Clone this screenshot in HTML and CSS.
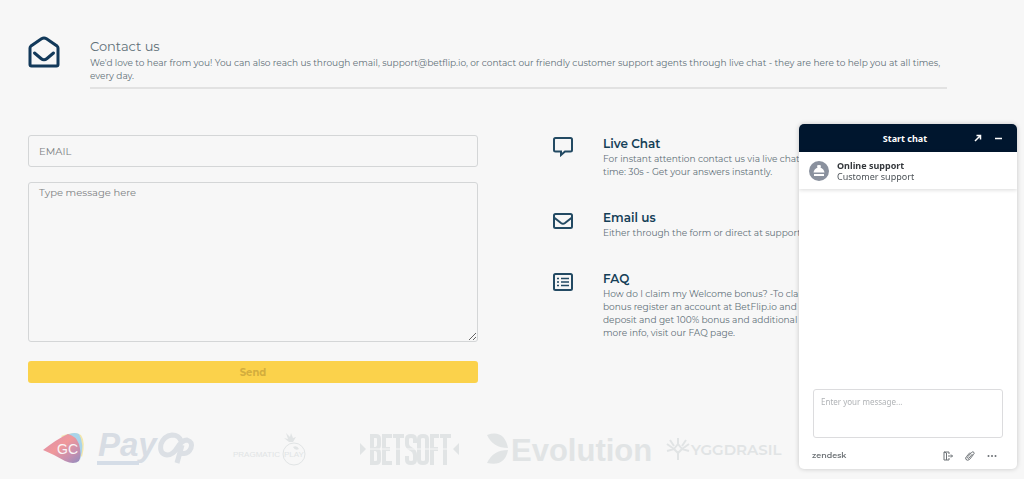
FILE: index.html
```
<!DOCTYPE html>
<html lang="en">
<head>
    <meta charset="UTF-8">
    <meta name="viewport" content="width=device-width, initial-scale=1.0">
    <title>Contact us</title>
    <link rel="stylesheet" href="styles.css">
</head>
<body>
    <main class="page">
        <header class="intro">
            <svg class="intro-icon" viewBox="0 0 32 32" aria-hidden="true">
                <path d="M2 12 Q2 11 3 10 L13.500 2.800 Q16 1.200 18.500 2.800 L29 10 Q30 11 30 12 V28.500 Q30 30 28.500 30 H3.500 Q2 30 2 28.500 Z"/>
                <path d="M6.500 17 L13 22.500 Q16 25 19 22.500 L25.500 17"/>
            </svg>
            <div class="intro-text">
                <h1>Contact us</h1>
                <p>We'd love to hear from you! You can also reach us through email, support@betflip.io, or contact our friendly customer support agents through live chat - they are here to help you at all times, every day.</p>
            </div>
        </header>

        <div class="columns">
            <form class="contact-form">
                <input type="email" aria-label="Email" placeholder="EMAIL">
                <textarea aria-label="Message" placeholder="Type message here"></textarea>
                <button type="submit" disabled>Send</button>
            </form>

            <div class="options">
                <section class="option">
                    <svg viewBox="0 0 20 20" aria-hidden="true">
                        <path d="M2.500 1 H17.500 Q19 1 19 2.500 V13 Q19 14.500 17.500 14.500 H12 L8 18 V14.500 H2.500 Q1 14.500 1 13 V2.500 Q1 1 2.500 1 Z"/>
                    </svg>
                    <div>
                        <h2>Live Chat</h2>
                        <p>For instant attention contact us via live chat. Average wait time: 30s - Get your answers instantly.</p>
                    </div>
                </section>
                <section class="option">
                    <svg viewBox="0 0 20 20" aria-hidden="true">
                        <rect x="1" y="3" width="18" height="14" rx="1.500"/>
                        <path d="M1 6.500 L8 12 Q10 13.500 12 12 L19 6.500"/>
                    </svg>
                    <div>
                        <h2>Email us</h2>
                        <p>Either through the form or direct at support@betflip.io</p>
                    </div>
                </section>
                <section class="option">
                    <svg viewBox="0 0 20 20" aria-hidden="true">
                        <rect x="1" y="2" width="18" height="16" rx="1.500"/>
                        <path class="thin" d="M8 6.500 H16 M8 10 H16 M8 13.500 H16 M4 6.500 H6 M4 10 H6 M4 13.500 H6"/>
                    </svg>
                    <div>
                        <h2>FAQ</h2>
                        <p>How do I claim my Welcome bonus? -To claim your first bonus register an account at BetFlip.io and simply make a deposit and get 100% bonus and additional 100 spins. For more info, visit our FAQ page.</p>
                    </div>
                </section>
            </div>
        </div>

        <footer class="partners">
            <svg width="47" height="64" viewBox="0 0 47 64" role="img" aria-label="GC">
                <defs>
                    <linearGradient id="gc" x1="0" y1="0" x2="1" y2="1">
                        <stop offset="0" stop-color="#d78fb0"/>
                        <stop offset=".45" stop-color="#f0989a"/>
                        <stop offset=".75" stop-color="#c58fb0"/>
                        <stop offset="1" stop-color="#8f8cc0"/>
                    </linearGradient>
                </defs>
                <path fill="#f3e7ac" d="M18 21 Q32 16 38 20 Q43 27 39 42 Z"/>
                <path fill="#a9d4ea" d="M20 22 Q30 16 36 19 Q42 29 37 45 Z"/>
                <path fill="url(#gc)" d="M0 35 Q14 24 25 19 Q33 21 36 29 Q39 40 36 46 Q31 50 22 46 Q12 40 0 35 Z"/>
                <text class="gc-text" x="14" y="39">GC</text>
            </svg>
            <svg width="124" height="64" viewBox="0 0 124 64" role="img" aria-label="PayOp">
                <text class="payop-text" x="8" y="41">Pay</text>
                <path class="payop-line" d="M7 48 H49"/>
                <path class="payop-loop" d="M91 26 Q89 20 82 20 Q74 21 71 29 Q69 39 77 40 Q83 40 87 33 Q92 25 97 25 Q103 27 101 33 Q98 40 91 38 M92 30 L87 48"/>
            </svg>
            <svg width="118" height="64" viewBox="0 0 118 64" role="img" aria-label="Pragmatic Play">
                <text class="pragmatic-text" x="19" y="42">PRAGMATIC</text>
                <text class="pragmatic-text" x="70" y="42">PLAY</text>
                <circle class="ring" cx="80" cy="39" r="11"/>
                <path d="M75 27 L70 23 L74 24 L72 18 L76 22 L77 18 L79 23 L82 22 L79 27 Z M79 32 Q83 30 85 34 Q81 36 79 32 Z"/>
            </svg>
            <svg width="141" height="64" viewBox="0 0 141 64" role="img" aria-label="Betsoft">
                <path d="M28 28 L34 34 L28 40 Z M127 28 L121 34 L127 40 Z"/>
                <path class="betsoft" d="M40 21 H44 Q47 21 47 24 V30 Q47 33 44 34 Q47 35 47 38 V45 Q47 48 44 48 H40 Z M40 34 H44 M60 21 H52 V48 H60 M52 34 H58 M61 21 H72 M66 21 V50 M83 28 V24 Q83 21 79 21 Q75 21 75 24 V29 Q75 32 79 34 Q83 36 83 40 V45 Q83 48 79 48 Q75 48 75 45 V41 M91 21 Q95 21 95 24 V45 Q95 48 91 48 Q87 48 87 45 V24 Q87 21 91 21 Z M107 21 H100 V50 M100 34 H106 M108 21 H119 M113 21 V50"/>
                <path class="cut" d="M36 34 H119"/>
            </svg>
            <svg width="185" height="64" viewBox="0 0 185 64" role="img" aria-label="Evolution">
                <path d="M14 20 Q31 14 35 33 Q20 33 14 20 Z M35 35 Q32 52 14 48 Q20 35 35 35 Z"/>
                <text class="evolution-text" x="38" y="46">Evolution</text>
            </svg>
            <svg width="132" height="64" viewBox="0 0 132 64" role="img" aria-label="Yggdrasil">
                <path class="tree" d="M20 45 V38 L16 34 L9 36 M20 38 L24 34 L31 36 M16 34 L9 29 M24 34 L31 29 M16 31 L12 25 M24 31 L28 25 M20 29 V23 M16 34 L20 29 L24 34 L20 38 Z"/>
                <text class="yggdrasil-text" x="33" y="40">YGGDRASIL</text>
            </svg>
        </footer>
    </main>

    <aside class="chat" aria-label="Start chat">
        <div class="chat-header">
            <h2>Start chat</h2>
            <div class="chat-actions">
                <button type="button" aria-label="Open in new window">
                    <svg viewBox="0 0 10 10"><path d="M2 8 L7.500 2.500 M3.500 2.500 H7.500 V6.500"/></svg>
                </button>
                <button type="button" aria-label="Minimize">
                    <svg viewBox="0 0 10 10"><path d="M1 5.500 H8"/></svg>
                </button>
            </div>
        </div>
        <div class="agent">
            <svg viewBox="0 0 20 20" aria-hidden="true">
                <circle cx="10" cy="10" r="10" fill="#8a919e"/>
                <path fill="#fff" d="M8 5 Q8 4 10 4 Q12 4 12 5 L11.500 6.500 Q15 8 15.500 11.500 H4.500 Q5 8 8.500 6.500 Z M5 13 H15 V15 H5 Z"/>
            </svg>
            <div>
                <strong>Online support</strong>
                <span>Customer support</span>
            </div>
        </div>
        <div class="chat-log"></div>
        <textarea class="chat-input" aria-label="Message" placeholder="Enter your message..."></textarea>
        <div class="chat-footer">
            <a href="#">zendesk</a>
            <div class="chat-tools">
                <button type="button" aria-label="End chat">
                    <svg viewBox="0 0 10 10"><path d="M6 3 V1 H1 V9 H6 V7 M1 1 L3.500 2 V9 M5 5 H9.500 M8 3.500 L9.500 5 L8 6.500"/></svg>
                </button>
                <button type="button" aria-label="Attach file">
                    <svg viewBox="0 0 10 10"><path d="M7.500 3 L4 7 Q3 8 2.500 7 Q2 6.500 3 5.500 L6.500 1.500 Q8 0 9 1.500 Q9.500 2.500 8.500 3.500 L4.500 8.500 Q2.500 10 1 8.500 Q0 7 1.500 5.500 L5 1.500"/></svg>
                </button>
                <button type="button" aria-label="Options">
                    <svg viewBox="0 0 10 10"><path class="dots" d="M1.500 5 H1.510 M5 5 H5.010 M8.500 5 H8.510"/></svg>
                </button>
            </div>
        </div>
    </aside>
</body>
</html>
```
FILE: styles.css
```
* {
    box-sizing: border-box;
}
body {
    margin: 0;
    background-color: #f7f7f7;
    color: #5f7078;
    font-family: Montserrat, Inter, sans-serif;
    font-size: 9px;
    line-height: 13px;
    overflow: hidden;
}
h1, h2, p {
    margin: 0;
}
button {
    font-family: inherit;
    border: none;
    padding: 0;
}
.page {
    padding: 36px 77px 0 28px;
}
.intro {
    display: grid;
    grid-template-columns: 32px 1fr;
    gap: 30px;
}
.intro-icon {
    width: 32px;
    fill: none;
    stroke: #12395a;
    stroke-width: 3;
    stroke-linecap: round;
}
.intro-text {
    border-bottom: 2px solid #e2e2e2;
    padding-bottom: 5px;
}
.intro h1 {
    font-size: 13px;
    font-weight: 400;
    line-height: 20px;
}
.columns {
    display: grid;
    grid-template-columns: 450fr 394fr;
    gap: 75px;
    margin-top: 46px;
}
.contact-form {
    display: flex;
    flex-direction: column;
}
.contact-form input,
.contact-form textarea {
    border: 1px solid #d4d6d7;
    border-radius: 3px;
    background-color: transparent;
    font-family: inherit;
    font-size: 10px;
    padding: 3px 10px;
}
.contact-form input {
    height: 32px;
    margin-bottom: 15px;
}
.contact-form textarea {
    height: 160px;
    margin-bottom: 19px;
}
.contact-form ::placeholder {
    color: #7d8183;
}
.contact-form button {
    height: 22px;
    border-radius: 3px;
    background-color: #fbd24b;
    color: #d3ad3d;
    font-size: 10px;
    font-weight: 700;
}
.option {
    display: grid;
    grid-template-columns: 20px 1fr;
    gap: 30px;
    margin-bottom: 31px;
}
.option svg {
    width: 20px;
    margin-top: 2px;
    fill: none;
    stroke: #234a63;
    stroke-width: 2;
}
.option svg .thin {
    stroke-width: 1.5;
}
.option h2 {
    color: #153f57;
    font-size: 12px;
    font-weight: 600;
    line-height: 17px;
}
.option p {
    max-width: 275px;
}
.partners {
    display: flex;
    margin: 32px 0 0 15px;
    fill: #e1e4e5;
}
.partners svg {
    flex: none;
}
.partners text {
    font-family: "Liberation Sans", Arial, sans-serif;
    font-weight: 700;
}
.partners .gc-text {
    fill: #f9f4f7;
    font-size: 14px;
    font-weight: 400;
}
.partners .payop-text {
    fill: #d8dde4;
    font-size: 33px;
    font-style: italic;
}
.payop-line {
    stroke: #d5dde7;
    stroke-width: 4;
}
.payop-loop {
    fill: none;
    stroke: #dce0e5;
    stroke-width: 5;
}
.partners .pragmatic-text {
    font-size: 8px;
    font-weight: 400;
}
.ring {
    fill: none;
    stroke: #e1e4e5;
    stroke-width: 1;
}
.betsoft {
    fill: none;
    stroke: #e1e4e5;
    stroke-width: 4;
}
.cut {
    stroke: #f7f7f7;
    stroke-width: 1;
}
.partners .evolution-text {
    font-size: 31px;
}
.tree {
    fill: none;
    stroke: #e1e4e5;
    stroke-width: 2;
}
.partners .yggdrasil-text {
    font-family: Montserrat, Lato, sans-serif;
    font-size: 15px;
    font-weight: 600;
}
.chat {
    position: fixed;
    right: 7px;
    bottom: 10px;
    display: flex;
    flex-direction: column;
    width: 218px;
    height: 345px;
    border-radius: 5px;
    background-color: #fff;
    box-shadow: 0 0 5px rgba(0, 0, 0, 0.2);
    font-family: "Noto Sans", sans-serif;
    overflow: hidden;
}
.chat-header {
    display: grid;
    grid-template-columns: 40px 1fr 40px;
    align-items: center;
    height: 28px;
    padding: 0 13px 0 7px;
    background-color: #00162e;
    color: #fff;
}
.chat-header h2 {
    grid-column: 2;
    font-size: 9px;
    text-align: center;
}
.chat button {
    display: flex;
    background: none;
    color: inherit;
}
.chat button svg {
    width: 10px;
    fill: none;
    stroke: currentColor;
    stroke-width: 1;
}
.chat .chat-actions svg {
    stroke-width: 1.5;
}
.chat-actions {
    display: flex;
    justify-content: flex-end;
    gap: 11px;
}
.agent {
    display: flex;
    align-items: center;
    gap: 8px;
    height: 37px;
    padding: 0 10px;
    box-shadow: 0 1px 4px rgba(0, 0, 0, 0.15);
    color: #4d5358;
    line-height: 11px;
}
.agent svg {
    width: 20px;
}
.agent strong,
.agent span {
    display: block;
}
.agent strong {
    color: #34383c;
}
.chat-log {
    flex: 1;
}
.chat-input {
    height: 49px;
    margin: 0 14px;
    padding: 6px 7px;
    border: 1px solid #dcdcde;
    border-radius: 3px;
    font-family: inherit;
    font-size: 8px;
    resize: none;
}
.chat-input::placeholder {
    color: #b0b3b6;
}
.chat-footer {
    display: flex;
    justify-content: space-between;
    align-items: center;
    height: 31px;
    padding: 4px 20px 0 13px;
    color: #6d7276;
}
.chat-footer a {
    color: inherit;
    font-family: Montserrat, Inter, sans-serif;
    font-size: 8px;
    font-weight: 600;
    text-decoration: none;
}
.chat-tools {
    display: flex;
    gap: 12px;
}
.dots {
    stroke-width: 2;
    stroke-linecap: round;
}
```
